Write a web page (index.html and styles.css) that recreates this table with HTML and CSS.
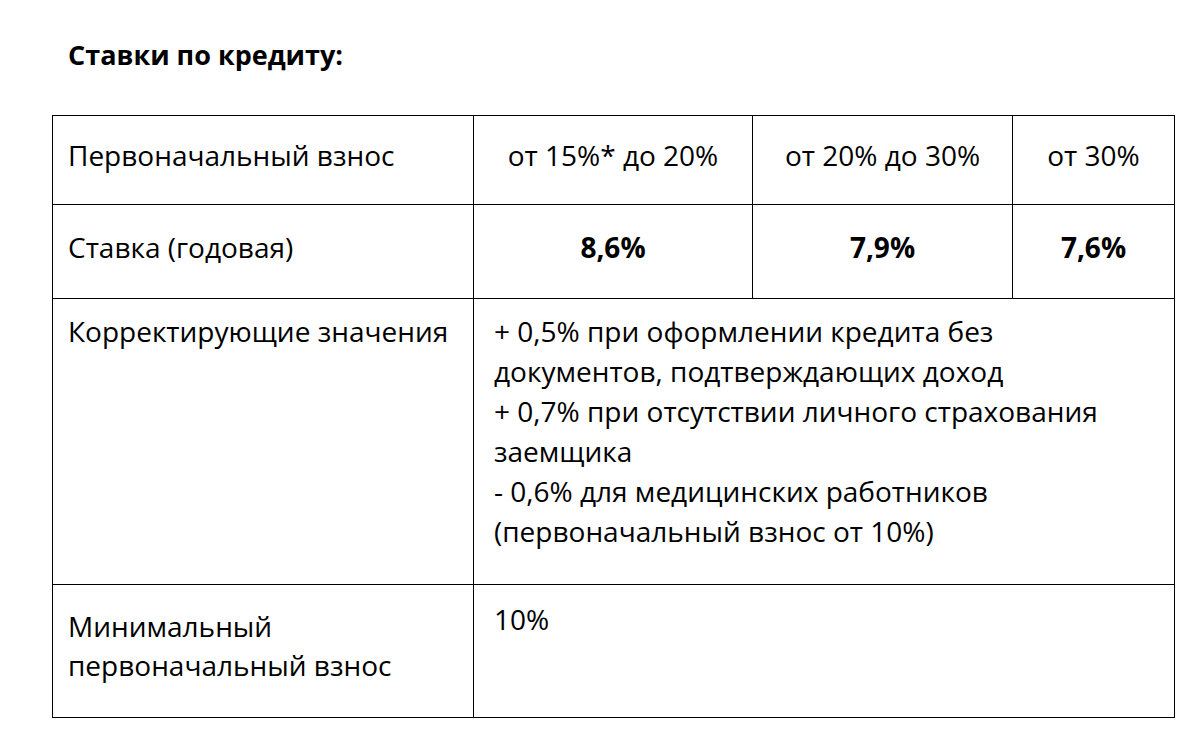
FILE: index.html
```html
<!DOCTYPE html>
<html lang="ru">
<head>
<meta charset="utf-8">
<link rel="stylesheet" href="styles.css">
</head>
<body>
<div class="page">
  <h1 class="title">Ставки по кредиту:</h1>
  <table class="rates">
    <colgroup>
      <col class="c1"><col class="c2"><col class="c3"><col class="c4">
    </colgroup>
    <tr class="r1">
      <td class="label">Первоначальный взнос</td>
      <td class="center">от 15%* до 20%</td>
      <td class="center">от 20% до 30%</td>
      <td class="center">от 30%</td>
    </tr>
    <tr class="r2">
      <td class="label">Ставка (годовая)</td>
      <td class="center bold">8,6%</td>
      <td class="center bold">7,9%</td>
      <td class="center bold">7,6%</td>
    </tr>
    <tr class="r3">
      <td class="label top">Корректирующие значения</td>
      <td class="text top" colspan="3">+ 0,5% при оформлении кредита без<br>документов, подтверждающих доход<br>+ 0,7% при отсутствии личного страхования<br>заемщика<br>- 0,6% для медицинских работников<br>(первоначальный взнос от 10%)</td>
    </tr>
    <tr class="r4">
      <td class="label top min">Минимальный<br>первоначальный взнос</td>
      <td class="text top" colspan="3">10%</td>
    </tr>
  </table>
</div>
</body>
</html>
```
FILE: styles.css
```css
html, body {
  margin: 0;
  padding: 0;
  background: #ffffff;
}
body {
  font-family: "Open Sans", "Noto Sans", sans-serif;
  color: #000000;
}
.page {
  padding: 37px 0 0 52px;
}
.title {
  margin: 0 0 0 16px;
  font-size: 27px;
  font-weight: 700;
  line-height: 36px;
}
.rates {
  margin-top: 42px;
  border-collapse: collapse;
  table-layout: fixed;
  width: 1122px;
  font-size: 28px;
  line-height: 40px;
}
.c1 { width: 421px; }
.c2 { width: 279px; }
.c3 { width: 260px; }
.c4 { width: 162px; }
.rates td {
  border: 1px solid #000000;
  padding: 0;
  white-space: nowrap;
  vertical-align: middle;
}
.r1 td { height: 78px; padding-bottom: 10px; }
.r2 td { height: 84px; padding-bottom: 9px; }
.r3 td { height: 273px; padding-top: 12px; vertical-align: top; }
.r4 td { height: 118px; padding-top: 14px; vertical-align: top; }
.r4 td.min { height: 110px; padding-top: 22px; line-height: 39px; }
.label { padding-left: 15px !important; }
.text { padding-left: 20px !important; }
.center { text-align: center; }
.bold { font-weight: 700; }
```
